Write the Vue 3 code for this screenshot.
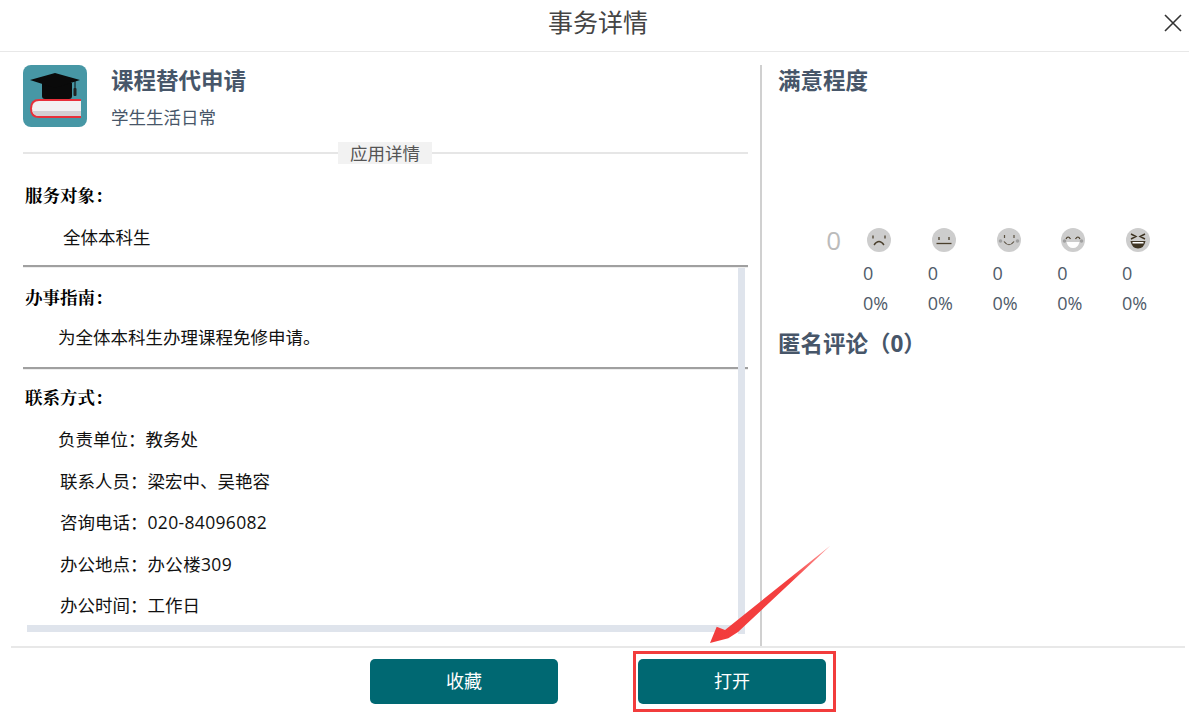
<script setup>
const contacts = [
  { label: "负责单位", value: "教务处", cls: "first" },
  { label: "联系人员", value: "梁宏中、吴艳容" },
  { label: "咨询电话", value: "020-84096082", cls: "num" },
  { label: "办公地点", value: "办公楼309", cls: "num" },
  { label: "办公时间", value: "工作日" },
];

const faces = ["sad", "flat", "smile", "grin", "laugh"];
</script>

<template>
  <div class="page">
    <header class="top">
      <h1 class="top-title">事务详情</h1>
      <svg class="close" width="18" height="18" viewBox="0 0 18 18">
        <path d="M1 1 L17 17 M17 1 L1 17" stroke="#333" stroke-width="1.6" fill="none" />
      </svg>
    </header>

    <main class="body">
      <section class="left">
        <div class="app-head">
          <svg class="app-icon" width="64" height="62" viewBox="0 0 64 62">
            <rect width="64" height="62" rx="8" fill="#4797a5" />
            <path d="M19 18 H49 V31 Q49 34 46 34 H22 Q19 34 19 31 Z" fill="#0a0a0a" />
            <path d="M7 15 L32 8 L57 15 L32 23 Z" fill="#0a0a0a" />
            <path d="M52 16 V24" stroke="#0a0a0a" stroke-width="1" />
            <rect x="50.500" y="23" width="3" height="8" rx="1" fill="#222" />
            <path d="M58 34 H16 Q7 34 7 43.5 Q7 53 16 53 H58 Z" fill="#e8303a" />
            <path d="M58 36 H16 Q9 36 9 43.5 Q9 51 16 51 H58 Z" fill="#f3f1f2" />
            <path d="M9.500 46 H58 V51 H16 Q11 51 9.500 46 Z" fill="#d3ced2" />
          </svg>
          <div class="app-text">
            <div class="app-name">课程替代申请</div>
            <div class="app-cat">学生生活日常</div>
          </div>
        </div>

        <div class="legend"><span>应用详情</span></div>

        <div class="block block-target">
          <div class="block-title">服务对象：</div>
          <div class="target-text">全体本科生</div>
        </div>

        <div class="scroll-area">
          <div class="block block-guide">
            <div class="block-title">办事指南：</div>
            <div class="guide-text">为全体本科生办理课程免修申请。</div>
          </div>
          <div class="block block-contact">
            <div class="block-title">联系方式：</div>
            <div
              v-for="item in contacts"
              :key="item.label"
              class="contact-row"
              :class="item.cls"
            >
              <span class="contact-label">{{ item.label }}：</span><span class="contact-value">{{ item.value }}</span>
            </div>
          </div>
          <div class="bar-v"></div>
          <div class="bar-h"></div>
        </div>
      </section>

      <aside class="right">
        <h2 class="right-title">满意程度</h2>
        <div class="rating">
          <div class="score">0</div>
          <div v-for="f in faces" :key="f" class="rating-col">
            <svg class="face" width="24" height="24" viewBox="0 0 24 24">
              <circle cx="12" cy="12" r="12" fill="#cdcdcd" />
              <g v-if="f === 'sad'" fill="none" stroke="#4a3f2c" stroke-width="1.300">
                <path d="M6 7.500 V10.500 M18 7.500 V10.500" />
                <path d="M7 17 Q12 10 17 17" />
              </g>
              <g v-else-if="f === 'flat'" fill="none" stroke="#4a3f2c" stroke-width="1.300">
                <path d="M7 9 V12 M17 9 V12" />
                <path d="M4.500 15.500 H19.500" />
              </g>
              <g v-else-if="f === 'smile'" fill="none" stroke="#5a5040" stroke-width="1.200">
                <circle cx="3.500" cy="13" r="1.800" fill="#a0a0a0" stroke="none" />
                <circle cx="20.500" cy="13" r="1.800" fill="#a0a0a0" stroke="none" />
                <path d="M7.500 7 V10 M17 7 V10" />
                <path d="M7 13.500 Q12 20 17 13.500" />
              </g>
              <g v-else-if="f === 'grin'">
                <circle cx="3.500" cy="13" r="1.800" fill="#a0a0a0" />
                <circle cx="20.500" cy="13" r="1.800" fill="#a0a0a0" />
                <path d="M5 11 Q7 7 9.500 11 M14.500 11 Q17 7 19 11" fill="none" stroke="#4a3f2c" stroke-width="1.200" />
                <path d="M5.500 14 H18.500 Q17 20 12 20 Q7 20 5.500 14 Z" fill="#fff" />
              </g>
              <g v-else>
                <path d="M5 6 L10 8.500 L5 11 M19 6 L14 8.500 L19 11" fill="none" stroke="#3f3524" stroke-width="1.400" />
                <path d="M4.500 13 H19.500 Q18 20.500 12 20.500 Q6 20.500 4.500 13 Z" fill="#3f3524" />
                <path d="M6.500 14 H17.500 V15.500 H6.500 Z" fill="#fff" />
              </g>
            </svg>
            <div class="count">0</div>
            <div class="count pct">0%</div>
          </div>
        </div>
        <h2 class="right-title comment">匿名评论（0）</h2>
      </aside>
    </main>

    <footer class="bottom">
      <button class="btn">收藏</button>
      <div class="btn-wrap">
        <button class="btn">打开</button>
        <div class="mark-box"></div>
      </div>
    </footer>

    <svg class="arrow" width="130" height="105" viewBox="0 0 130 105">
      <defs>
        <linearGradient id="arrowFill" x1="1" y1="0" x2="0" y2="1">
          <stop offset="0" stop-color="#ff9c9c" />
          <stop offset="0.35" stop-color="#f44040" />
          <stop offset="1" stop-color="#f23c3c" />
        </linearGradient>
      </defs>
      <!-- tip at lower left, tail at upper right -->
      <path d="M0 103 L6.700 86.700 L15 90 L120.500 5.500 L28 92 L18.300 98.300 Z" fill="url(#arrowFill)" />
    </svg>
  </div>
</template>

<style>
html,
body {
  margin: 0;
  background: #fff;
}
</style>

<style scoped>
.page {
  position: relative;
  width: 1189px;
  height: 712px;
  overflow: hidden;
  background: #fff;
  font-family: "Open Sans", "Noto Sans CJK SC", sans-serif;
  color: #475669;
}

.top {
  position: relative;
  height: 51px;
  border-bottom: 1px solid #e8e8e8;
  display: flex;
  align-items: center;
  justify-content: center;
  padding-left: 7px;
}

.top-title {
  margin: 0 0 7px;
  font-size: 25px;
  font-weight: 400;
  line-height: 36px;
  color: #444;
}

.close {
  position: absolute;
  right: 7px;
  top: 14px;
}

.body {
  height: 594px;
  padding: 13px 0 0 23px;
  box-sizing: border-box;
  display: flex;
}

.left {
  width: 725px;
  flex-shrink: 0;
}

.app-head {
  display: flex;
  height: 62px;
}

.app-icon {
  display: block;
  flex-shrink: 0;
}

.app-text {
  margin-left: 24px;
}

.app-name {
  font-size: 22.500px;
  font-weight: 700;
  line-height: 32px;
}

.app-cat {
  font-size: 17.500px;
  line-height: 26px;
  margin-top: 7px;
}

.legend {
  height: 22px;
  margin-top: 15px;
  display: flex;
  justify-content: center;
  background: linear-gradient(#e6e6e6, #e6e6e6) 0 10px / 100% 2px no-repeat;
}

.legend span {
  width: 94px;
  height: 22px;
  margin-left: -1px;
  line-height: 22px;
  text-align: center;
  font-size: 17.500px;
  background: #f2f2f2;
  color: #555;
}

.block-title {
  font-family: "Liberation Serif", "Noto Serif CJK SC", "Noto Sans CJK SC", serif;
  font-size: 17.500px;
  font-weight: 700;
  line-height: 26px;
  color: #000;
  padding-left: 2px;
}

.block-target {
  height: 103px;
  box-sizing: border-box;
  padding-top: 19px;
  border-bottom: 2px solid #a0a0a0;
  box-shadow: 0 1px 0 #eee;
  margin-bottom: 1px;
}

.target-text {
  margin-top: 15px;
  padding-left: 40px;
  font-size: 17.500px;
  line-height: 26px;
  color: #111;
}

.scroll-area {
  position: relative;
  height: 376px;
}

.block-guide {
  height: 101px;
  box-sizing: border-box;
  padding-top: 17px;
  border-bottom: 2px solid #a0a0a0;
  box-shadow: 0 1px 0 #eee;
  margin-bottom: 1px;
}

.guide-text {
  margin-top: 13px;
  padding-left: 35px;
  font-size: 17.500px;
  line-height: 26px;
  color: #111;
}

.block-contact {
  padding-top: 15px;
}

.contact-row {
  height: 41.500px;
  padding-left: 37px;
  font-size: 17.500px;
  line-height: 26px;
  color: #111;
  padding-top: 8px;
  box-sizing: border-box;
  white-space: nowrap;
}

.contact-row.first {
  margin-top: 7px;
  padding-left: 35px;
}

.contact-row.num .contact-value {
  letter-spacing: 0.33px;
}

.bar-v {
  position: absolute;
  left: 715px;
  top: 0;
  width: 7px;
  height: 366px;
  background: #dfe4ec;
}

.bar-h {
  position: absolute;
  left: 4px;
  top: 357px;
  width: 718px;
  height: 7px;
  background: #dfe4ec;
}

.right {
  margin-left: 12px;
  width: 408px;
  flex-shrink: 0;
  border-left: 2px solid #d0d0d0;
  padding-left: 16px;
}

.right-title {
  margin: 0;
  font-size: 22.500px;
  font-weight: 700;
  line-height: 32px;
}

.rating {
  display: grid;
  grid-template-columns: 85px repeat(5, 64.750px);
  margin-top: 131px;
}

.score {
  font-size: 26px;
  line-height: 24px;
  color: #bbb;
  text-align: right;
  padding-right: 22px;
}

.rating-col {
  font-size: 18px;
  line-height: 26px;
}

.face {
  display: block;
  margin-left: 4px;
}

.count {
  margin-top: 8px;
  color: #4f5b69;
}

.count.pct {
  margin-top: 4px;
}

.comment {
  margin-top: 12px;
}

.bottom {
  height: 65px;
  margin: 0 4px 0 11px;
  border-top: 2px solid #e8e8e8;
  box-sizing: border-box;
  padding-top: 11px;
  display: flex;
  justify-content: center;
  gap: 80px;
}

.btn-wrap {
  position: relative;
}

.btn {
  display: block;
  width: 188px;
  height: 45px;
  border: none;
  border-radius: 5px;
  background: #006872;
  color: #fff;
  font-family: "Open Sans", "Noto Sans CJK SC", sans-serif;
  font-size: 18px;
  padding: 0 0 4px;
}

.mark-box {
  position: absolute;
  left: -5px;
  top: -8px;
  width: 203px;
  height: 61px;
  box-sizing: border-box;
  border: 3px solid #f23c3c;
}

.arrow {
  position: absolute;
  left: 710px;
  top: 540px;
}
</style>
